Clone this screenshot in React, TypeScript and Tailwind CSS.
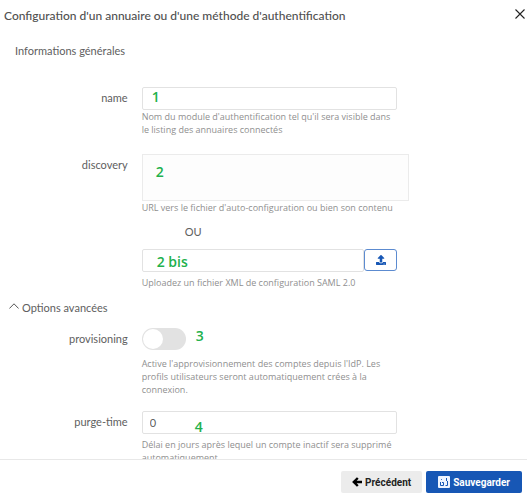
import type { ReactNode } from "react";
import { FaUpload } from "react-icons/fa";

function Mark({ className, children }: { className: string; children: ReactNode }) {
  return (
    <span
      className={`pointer-events-none absolute font-['Open_Sans',sans-serif] text-[14px] leading-4 font-semibold text-[#22b14c] ${className}`}
    >
      {children}
    </span>
  );
}

function Row({ id, label, children }: { id: string; label: string; children: ReactNode }) {
  return (
    <div className="grid grid-cols-[1fr_2fr] gap-x-[14px] pr-[130px]">
      <label htmlFor={id} className="pt-1 text-right text-[11px] leading-[13px] text-[#606060]">
        {label}
      </label>
      <div className="min-w-0">{children}</div>
    </div>
  );
}

function Help({ children }: { children: ReactNode }) {
  return <p className="font-['Open_Sans',sans-serif] text-[9px] leading-[13px] text-[#8f8f8f]">{children}</p>;
}

function BackIcon() {
  return (
    <svg viewBox="0 0 10 10" className="size-[10px]" fill="none" stroke="black" strokeWidth="2.400" aria-hidden="true">
      <path d="M5.800 1L1.800 5l4 4M2 5h8" />
    </svg>
  );
}

function SaveIcon() {
  return (
    <svg viewBox="0 0 12 12" className="size-3" fill="none" stroke="#1757b5" aria-hidden="true">
      <rect width="12" height="12" rx="1" fill="#eef4ff" stroke="none" />
      <path d="M2.500 6v3.500H5.500V6.500H4M9.500 5v4.500H7.500M8.500 2v3" />
      <path d="M3 3.500h1" strokeWidth="0.8" />
    </svg>
  );
}

export default function App() {
  return (
    <div className="flex h-screen flex-col bg-white font-[Lato,sans-serif] text-[#606060]">
      <header className="flex h-8 shrink-0 items-center justify-between pr-[2px] pl-1">
        <h1 className="text-[12px] leading-4 font-medium text-[#505050]">
          Configuration d'un annuaire ou d'une méthode d'authentification
        </h1>
        <button type="button" aria-label="Fermer" className="mb-1 text-[#222]">
          <svg viewBox="0 0 10 10" className="size-[10px]" aria-hidden="true">
            <path d="M.5.5l9 9M9.5.5l-9 9" fill="none" stroke="currentColor" strokeWidth="1.1" />
          </svg>
        </button>
      </header>

      <main className="min-h-0 flex-1 overflow-y-auto pt-3 [scrollbar-width:none]">
        <h2 className="mb-[30px] pl-[15px] text-[11px] leading-[13px]">Informations générales</h2>

        <Row id="name" label="name">
          <div className="relative">
            <input id="name" className="block h-[23px] w-full rounded-[2px] border border-[#e2e2e2] px-2 text-[11px] outline-none" />
            <Mark className="top-[2px] left-[10px]">1</Mark>
          </div>
          <Help>Nom du module d'authentification tel qu'il sera visible dans le listing des annuaires connectés</Help>
        </Row>

        <div className="mt-[18px]">
          <Row id="discovery" label="discovery">
            <div className="relative -mr-3">
              <textarea
                id="discovery"
                className="block h-[47px] w-full resize-none border border-[#ebebeb] bg-[#fdfdfd] px-2 text-[11px] outline-none"
              />
              <Mark className="top-[10px] left-[14px]">2</Mark>
            </div>
            <Help>URL vers le fichier d'auto-configuration ou bien son contenu</Help>
            <p className="my-[11px] pl-[43px] text-[11px] leading-[13px]">OU</p>
            <div className="relative mb-1 flex">
              <input
                aria-label="Fichier XML"
                className="h-[23px] min-w-0 flex-1 rounded-[2px] border border-[#e2e2e2] px-2 text-[11px] outline-none"
              />
              <button
                type="button"
                aria-label="Uploader"
                className="flex h-[22px] w-[33px] items-center justify-center rounded-[3px] border border-[#5c8bd0] text-[#1757b5]"
              >
                <FaUpload className="size-[10px]" />
              </button>
              <Mark className="top-[5px] left-[15px]">2 bis</Mark>
            </div>
            <Help>Uploadez un fichier XML de configuration SAML 2.0</Help>
          </Row>
        </div>

        <button type="button" className="mt-3 mb-[14px] flex items-center gap-[3px] pl-[9px] text-[11px] leading-[13px]">
          <svg viewBox="0 0 10 6" className="mb-1 h-[6px] w-[10px]" aria-hidden="true">
            <path d="M.4 5.500L5 .8l4.600 4.700" fill="none" stroke="#555" strokeWidth="1" />
          </svg>
          Options avancées
        </button>

        <Row id="provisioning" label="provisioning">
          <div className="relative mb-[7px] flex">
            <input
              id="provisioning"
              type="checkbox"
              role="switch"
              className="h-[22px] w-11 appearance-none rounded-full bg-[#e2e2e2] p-px before:block before:size-5 before:rounded-full before:bg-white checked:bg-[#1757b5] checked:before:ml-[22px]"
            />
            <Mark className="top-0 left-[54px]">3</Mark>
          </div>
          <Help>
            Active l'approvisionnement des comptes depuis l'IdP. Les profils utilisateurs seront automatiquement crées à la
            connexion.
          </Help>
        </Row>

        <div className="mt-[15px]">
          <Row id="purge-time" label="purge-time">
            <div className="relative mb-1">
              <input
                id="purge-time"
                defaultValue="0"
                className="block h-[23px] w-full rounded-[2px] border border-[#e2e2e2] px-[7px] text-[11px] outline-none"
              />
              <Mark className="top-2 left-[53px]">4</Mark>
            </div>
            <Help>Délai en jours après lequel un compte inactif sera supprimé automatiquement</Help>
          </Row>
        </div>
      </main>

      <footer className="flex shrink-0 justify-end gap-1 border-t border-[#e8e8e8] pt-[11px] pr-[5px] pb-[2px] font-[Roboto,sans-serif] text-[10px] font-bold">
        <button type="button" className="flex h-[22px] items-center gap-[3px] rounded-[2px] bg-[#ececec] px-[11px] text-[#222]">
          <BackIcon />
          Précédent
        </button>
        <button type="button" className="flex h-[22px] items-center gap-[3px] rounded-[2px] bg-[#1757b5] px-3 text-white">
          <SaveIcon />
          Sauvegarder
        </button>
      </footer>
    </div>
  );
}
